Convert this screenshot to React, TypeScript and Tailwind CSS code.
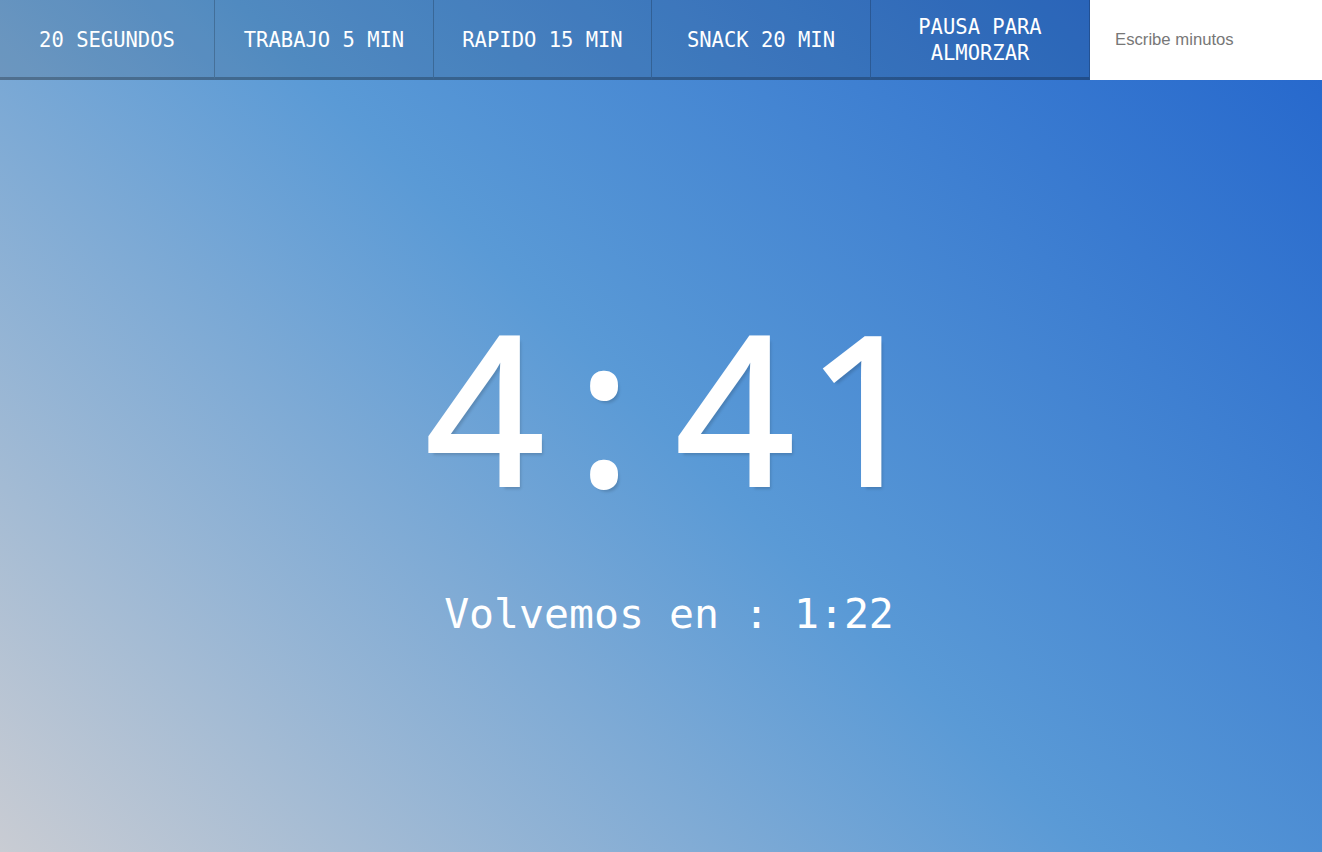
const presets = [
  { label: '20 SEGUNDOS', w: 'w-[215px]' },
  { label: 'TRABAJO 5 MIN', w: 'w-[219px]' },
  { label: 'RAPIDO 15 MIN', w: 'w-[218px]' },
  { label: 'SNACK 20 MIN', w: 'w-[219px]' },
  { label: 'PAUSA PARA ALMORZAR', w: 'w-[219px]' },
]

export default function App() {
  return (
    <div className="h-[852px] w-full flex flex-col bg-[linear-gradient(45deg,#c9ccd3_0%,#5a9ad6_50%,#2365cc_100%)] font-['DejaVu_Sans_Mono',monospace] text-white overflow-hidden">
      <nav className="flex h-20 shrink-0">
        {presets.map((p) => (
          <button
            key={p.label}
            className={`${p.w} shrink-0 h-20 box-border px-2 pt-[2px] bg-black/10 border-r border-b-[3px] border-r-black/20 border-b-black/25 text-[20.5px] leading-[26px] text-white text-center`}
          >
            {p.label}
          </button>
        ))}
        <input
          type="text"
          placeholder="Escribe minutos"
          className="flex-1 min-w-0 h-20 bg-white pl-[25px] text-[16.7px] text-gray-700 placeholder:text-[#777] outline-none font-['Liberation_Sans',Arial,sans-serif]"
        />
      </nav>

      <main className="flex-1 flex flex-col items-center justify-center pt-[4px]">
        {/* big countdown, each glyph in its own cell */}
        <h1 className="flex ml-[-4px] font-['Open_Sans',sans-serif] text-[206px] leading-none font-medium [-webkit-text-stroke:4px_white] [text-shadow:3px_4px_3px_rgba(0,0,0,0.15)]">
          <span className="w-[120px] text-center">4</span>
          <span className="w-[118px] text-center">:</span>
          <span className="w-[144px] text-center">4</span>
          <span className="w-[86px] text-center">1</span>
        </h1>
        <p className="mt-[85px] ml-[16px] text-[41.5px] leading-none">Volvemos en : 1:22</p>
      </main>
    </div>
  )
}
